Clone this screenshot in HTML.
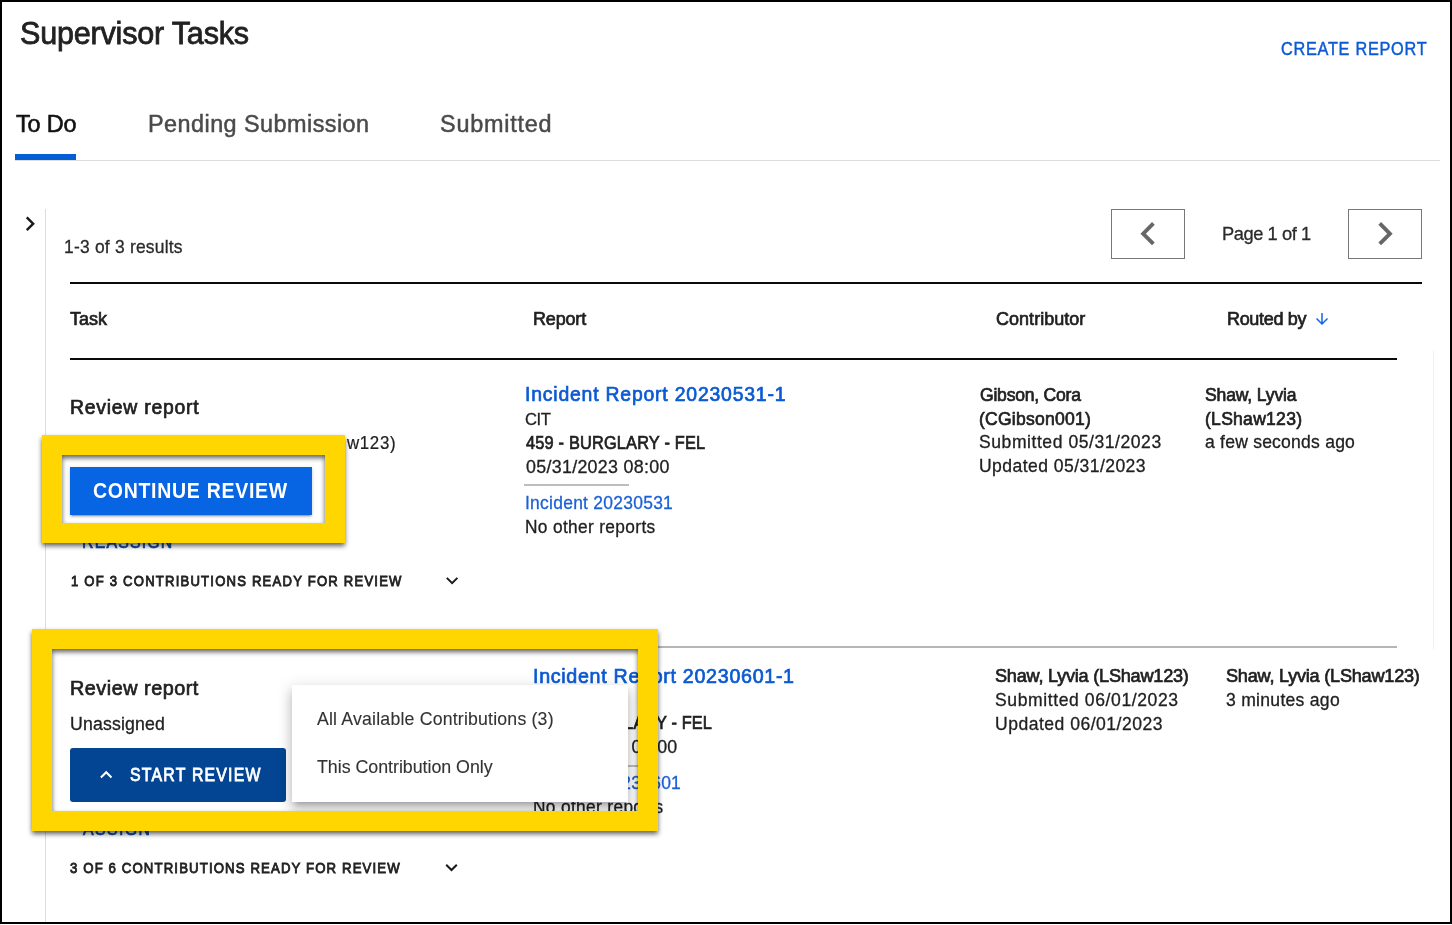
<!DOCTYPE html>
<html><head><meta charset="utf-8"><title>Supervisor Tasks</title>
<style>
html,body{margin:0;padding:0;background:#fff;}
body{width:1452px;height:925px;overflow:hidden;position:relative;font-family:"Liberation Sans",sans-serif;}
#root{position:absolute;left:0;top:0;width:1452px;height:925px;overflow:hidden;}
.t{position:absolute;white-space:nowrap;line-height:1;font-family:"Liberation Sans",sans-serif;}
.s{position:absolute;}


</style></head>
<body class="">
<div id="root">
<div class="s shape" style="left:15px;top:160px;width:1425px;height:1px;background:#dddddd"></div>
<div class="s shape" style="left:15px;top:154px;width:61px;height:6px;background:#045ed4"></div>
<div class="s shape" style="left:45px;top:209px;width:1px;height:713px;background:#dddddd"></div>
<svg class="s shape" style="left:0;top:0" width="1452" height="925" viewBox="0 0 1452 925">
  <path transform="translate(15.4,209.1) scale(1.22)" d="M10 6L8.59 7.41 13.17 12l-4.58 4.59L10 18l6-6z" fill="#1a1a1a"/>
  <rect x="1111.5" y="209.5" width="73" height="49" fill="none" stroke="#777" stroke-width="1"/>
  <rect x="1348.5" y="209.5" width="73" height="49" fill="none" stroke="#777" stroke-width="1"/>
  <path transform="translate(1125,210.5) scale(1.93)" d="M15.41 7.41L14 6l-6 6 6 6 1.41-1.41L10.83 12z" fill="#666"/>
  <path transform="translate(1361.8,210.5) scale(1.93)" d="M10 6L8.59 7.41 13.17 12l-4.58 4.59L10 18l6-6z" fill="#666"/>
  <path transform="translate(1313,310) scale(0.75)" d="M20 12l-1.41-1.41L13 16.17V4h-2v12.17l-5.58-5.59L4 12l8 8 8-8z" fill="#1565e6"/>
  <path transform="translate(440.1,568.6)" d="M16.59 8.59L12 13.17 7.41 8.59 6 10l6 6 6-6z" fill="#1a1a1a"/>
  <path transform="translate(439.5,855.4)" d="M16.59 8.59L12 13.17 7.41 8.59 6 10l6 6 6-6z" fill="#1a1a1a"/>
</svg>
<div class="s shape" style="left:70px;top:282px;width:1352px;height:2px;background:#0a0a0a"></div>
<div class="s shape" style="left:70px;top:358px;width:1327px;height:2px;background:#0a0a0a"></div>
<div class="s shape" style="left:1433px;top:351px;width:1px;height:298px;background:#f0f0f0"></div>
<div class="s shape" style="left:70px;top:467px;width:242px;height:48px;background:#0764e3;box-shadow:0 3px 1px -2px rgba(0,0,0,.2),0 2px 2px 0 rgba(0,0,0,.14),0 1px 5px 0 rgba(0,0,0,.12)"></div>
<div class="s shape" style="left:524px;top:484px;width:105px;height:2px;background:#bdbdbd"></div>
<div class="s shape" style="left:70px;top:646px;width:1327px;height:2px;background:#b5b5b5"></div>
<div class="s shape" style="left:70px;top:748px;width:216px;height:54px;border-radius:3px;background:#034592"></div>
<svg class="s shape" style="left:0;top:0;z-index:1" width="1452" height="925" viewBox="0 0 1452 925">
  <path transform="translate(94.2,762.8)" d="M12 8l-6 6 1.41 1.41L12 10.83l4.59 4.58L18 14z" fill="#fff"/>
</svg>
<div class="s shape" style="left:533px;top:765px;width:105px;height:2px;background:#bdbdbd"></div>
<div class="s shape" style="left:0;top:0;width:1452px;height:924px;box-sizing:border-box;border:2px solid #000;z-index:30"></div>

<div class="t" id="title" style="left:19.70px;top:17.60px;font-size:31.83px;letter-spacing:-0.210px;color:#212121;-webkit-text-stroke:0.8px #212121;transform:scaleX(0.96);transform-origin:0 0">Supervisor Tasks</div>
<div class="t" id="create" style="left:1281.30px;top:38.90px;font-size:19.19px;letter-spacing:0.832px;color:#0b5ad3;-webkit-text-stroke:0.45px #0b5ad3;transform:scaleX(0.85);transform-origin:0 0">CREATE REPORT</div>
<div class="t" id="tab1" style="left:15.60px;top:111.71px;font-size:24.42px;letter-spacing:-0.197px;color:#111111;-webkit-text-stroke:0.6px #111111;transform:scaleX(0.96);transform-origin:0 0">To Do</div>
<div class="t" id="tab2" style="left:147.80px;top:111.71px;font-size:24.42px;letter-spacing:0.461px;color:#4a4a4a;-webkit-text-stroke:0.5px #4a4a4a;transform:scaleX(0.96);transform-origin:0 0">Pending Submission</div>
<div class="t" id="tab3" style="left:440.20px;top:111.71px;font-size:24.42px;letter-spacing:0.800px;color:#4a4a4a;-webkit-text-stroke:0.5px #4a4a4a;transform:scaleX(0.96);transform-origin:0 0">Submitted</div>
<div class="t" id="results" style="left:64.20px;top:237.51px;font-size:18.17px;letter-spacing:0.228px;color:#2a2a2a;-webkit-text-stroke:0.3px #2a2a2a;transform:scaleX(0.96);transform-origin:0 0">1-3 of 3 results</div>
<div class="t" id="page" style="left:1221.50px;top:224.31px;font-size:19.04px;letter-spacing:-0.457px;color:#2a2a2a;-webkit-text-stroke:0.3px #2a2a2a;transform:scaleX(0.96);transform-origin:0 0">Page 1 of 1</div>
<div class="t" id="h_task" style="left:70.20px;top:309.90px;font-size:18.75px;letter-spacing:0.036px;color:#212121;-webkit-text-stroke:0.7px #212121;transform:scaleX(0.96);transform-origin:0 0">Task</div>
<div class="t" id="h_report" style="left:532.60px;top:309.90px;font-size:18.75px;letter-spacing:-0.171px;color:#212121;-webkit-text-stroke:0.7px #212121;transform:scaleX(0.96);transform-origin:0 0">Report</div>
<div class="t" id="h_contrib" style="left:996.10px;top:309.90px;font-size:18.75px;letter-spacing:0.027px;color:#212121;-webkit-text-stroke:0.7px #212121;transform:scaleX(0.96);transform-origin:0 0">Contributor</div>
<div class="t" id="h_routed" style="left:1227.00px;top:309.90px;font-size:18.75px;letter-spacing:-0.331px;color:#212121;-webkit-text-stroke:0.7px #212121;transform:scaleX(0.96);transform-origin:0 0">Routed by</div>
<div class="t" id="r1_task" style="left:69.80px;top:396.90px;font-size:20.20px;letter-spacing:0.790px;color:#212121;-webkit-text-stroke:0.7px #212121;transform:scaleX(0.96);transform-origin:0 0">Review report</div>
<div class="t" id="r1_assigned" style="left:346.70px;top:434.90px;font-size:17.59px;letter-spacing:0.677px;color:#212121;-webkit-text-stroke:0.2px #212121;transform:scaleX(0.96);transform-origin:0 0">w123)</div>
<div class="t" id="r1_reassign" style="left:82.10px;top:532.81px;font-size:18.02px;letter-spacing:1.359px;color:#0b4aa8;-webkit-text-stroke:0.7px #0b4aa8;transform:scaleX(0.88);transform-origin:0 0">REASSIGN</div>
<div class="t" id="r1_contrib" style="left:70.80px;top:572.71px;font-size:15.41px;letter-spacing:1.415px;color:#222222;-webkit-text-stroke:0.9px #222222;transform:scaleX(0.85);transform-origin:0 0">1 OF 3 CONTRIBUTIONS READY FOR REVIEW</div>
<div class="t" id="r1_btn" style="left:93.40px;top:479.81px;font-size:21.66px;letter-spacing:0.800px;color:#ffffff;font-weight:700;transform:scaleX(0.9);transform-origin:0 0">CONTINUE REVIEW</div>
<div class="t" id="r1_rep1" style="left:524.60px;top:384.21px;font-size:20.20px;letter-spacing:0.841px;color:#0b5ad3;-webkit-text-stroke:0.7px #0b5ad3;transform:scaleX(0.96);transform-origin:0 0">Incident Report 20230531-1</div>
<div class="t" id="r1_rep2" style="left:524.60px;top:410.71px;font-size:17.30px;letter-spacing:-0.434px;color:#212121;-webkit-text-stroke:0.3px #212121;transform:scaleX(0.96);transform-origin:0 0">CIT</div>
<div class="t" id="r1_rep3" style="left:525.60px;top:433.80px;font-size:18.17px;letter-spacing:0.204px;color:#212121;-webkit-text-stroke:0.7px #212121;transform:scaleX(0.9);transform-origin:0 0">459 - BURGLARY - FEL</div>
<div class="t" id="r1_rep4" style="left:525.60px;top:458.00px;font-size:18.60px;letter-spacing:0.306px;color:#212121;-webkit-text-stroke:0.3px #212121;transform:scaleX(0.96);transform-origin:0 0">05/31/2023 08:00</div>
<div class="t" id="r1_rep5" style="left:524.60px;top:493.80px;font-size:18.17px;letter-spacing:0.284px;color:#1a60d6;-webkit-text-stroke:0.3px #1a60d6;transform:scaleX(0.96);transform-origin:0 0">Incident 20230531</div>
<div class="t" id="r1_rep6" style="left:524.60px;top:517.71px;font-size:18.02px;letter-spacing:0.362px;color:#212121;-webkit-text-stroke:0.3px #212121;transform:scaleX(0.96);transform-origin:0 0">No other reports</div>
<div class="t" id="r1_c1" style="left:979.60px;top:386.21px;font-size:18.31px;letter-spacing:-0.245px;color:#212121;-webkit-text-stroke:0.7px #212121;transform:scaleX(0.96);transform-origin:0 0">Gibson, Cora</div>
<div class="t" id="r1_c2" style="left:978.60px;top:409.60px;font-size:18.31px;letter-spacing:0.226px;color:#212121;-webkit-text-stroke:0.7px #212121;transform:scaleX(0.96);transform-origin:0 0">(CGibson001)</div>
<div class="t" id="r1_c3" style="left:978.60px;top:433.31px;font-size:18.31px;letter-spacing:0.565px;color:#212121;-webkit-text-stroke:0.3px #212121;transform:scaleX(0.96);transform-origin:0 0">Submitted 05/31/2023</div>
<div class="t" id="r1_c4" style="left:978.60px;top:456.50px;font-size:18.31px;letter-spacing:0.452px;color:#212121;-webkit-text-stroke:0.3px #212121;transform:scaleX(0.96);transform-origin:0 0">Updated 05/31/2023</div>
<div class="t" id="r1_r1" style="left:1205.40px;top:386.21px;font-size:18.31px;letter-spacing:-0.155px;color:#212121;-webkit-text-stroke:0.7px #212121;transform:scaleX(0.96);transform-origin:0 0">Shaw, Lyvia</div>
<div class="t" id="r1_r2" style="left:1205.40px;top:409.60px;font-size:18.31px;letter-spacing:0.265px;color:#212121;-webkit-text-stroke:0.7px #212121;transform:scaleX(0.96);transform-origin:0 0">(LShaw123)</div>
<div class="t" id="r1_r3" style="left:1205.40px;top:433.31px;font-size:18.31px;letter-spacing:0.222px;color:#212121;-webkit-text-stroke:0.3px #212121;transform:scaleX(0.96);transform-origin:0 0">a few seconds ago</div>
<div class="t" id="r2_task" style="left:69.80px;top:677.81px;font-size:20.64px;letter-spacing:0.539px;color:#212121;-webkit-text-stroke:0.7px #212121;transform:scaleX(0.96);transform-origin:0 0">Review report</div>
<div class="t" id="r2_unassigned" style="left:69.80px;top:714.51px;font-size:18.46px;letter-spacing:0.149px;color:#212121;-webkit-text-stroke:0.3px #212121;transform:scaleX(0.96);transform-origin:0 0">Unassigned</div>
<div class="t" id="r2_assign" style="left:83.00px;top:820.01px;font-size:18.02px;letter-spacing:1.618px;color:#0b4aa8;-webkit-text-stroke:0.7px #0b4aa8;transform:scaleX(0.88);transform-origin:0 0">ASSIGN</div>
<div class="t" id="r2_contrib" style="left:69.50px;top:859.90px;font-size:15.55px;letter-spacing:1.304px;color:#222222;-webkit-text-stroke:0.9px #222222;transform:scaleX(0.85);transform-origin:0 0">3 OF 6 CONTRIBUTIONS READY FOR REVIEW</div>
<div class="t" id="r2_btn" style="left:130.20px;top:765.81px;font-size:18.02px;letter-spacing:1.377px;color:#ffffff;-webkit-text-stroke:0.8px #ffffff;transform:scaleX(0.88);transform-origin:0 0;z-index:2">START REVIEW</div>
<div class="t" id="r2_rep1" style="left:533.00px;top:665.50px;font-size:20.49px;letter-spacing:0.719px;color:#0b5ad3;-webkit-text-stroke:0.7px #0b5ad3;transform:scaleX(0.96);transform-origin:0 0">Incident Report 20230601-1</div>
<div class="t" id="r2_rep2" style="left:533.00px;top:691.51px;font-size:17.30px;letter-spacing:-0.472px;color:#212121;-webkit-text-stroke:0.3px #212121;transform:scaleX(0.96);transform-origin:0 0">CIT</div>
<div class="t" id="r2_rep3" style="left:534.00px;top:714.40px;font-size:18.17px;letter-spacing:0.134px;color:#212121;-webkit-text-stroke:0.7px #212121;transform:scaleX(0.9);transform-origin:0 0">459 - BURGLARY - FEL</div>
<div class="t" id="r2_rep4" style="left:534.00px;top:738.00px;font-size:18.60px;letter-spacing:0.301px;color:#212121;-webkit-text-stroke:0.3px #212121;transform:scaleX(0.96);transform-origin:0 0">06/01/2023 08:00</div>
<div class="t" id="r2_rep5" style="left:533.00px;top:774.30px;font-size:18.17px;letter-spacing:0.283px;color:#1a60d6;-webkit-text-stroke:0.3px #1a60d6;transform:scaleX(0.96);transform-origin:0 0">Incident 20230601</div>
<div class="t" id="r2_rep6" style="left:533.00px;top:798.01px;font-size:18.02px;letter-spacing:0.366px;color:#212121;-webkit-text-stroke:0.3px #212121;transform:scaleX(0.96);transform-origin:0 0">No other reports</div>
<div class="t" id="r2_c1" style="left:994.80px;top:667.31px;font-size:18.90px;letter-spacing:-0.251px;color:#212121;-webkit-text-stroke:0.7px #212121;transform:scaleX(0.96);transform-origin:0 0">Shaw, Lyvia (LShaw123)</div>
<div class="t" id="r2_c2" style="left:994.80px;top:690.90px;font-size:18.31px;letter-spacing:0.613px;color:#212121;-webkit-text-stroke:0.3px #212121;transform:scaleX(0.96);transform-origin:0 0">Submitted 06/01/2023</div>
<div class="t" id="r2_c3" style="left:994.80px;top:714.71px;font-size:18.31px;letter-spacing:0.507px;color:#212121;-webkit-text-stroke:0.3px #212121;transform:scaleX(0.96);transform-origin:0 0">Updated 06/01/2023</div>
<div class="t" id="r2_r1" style="left:1226.30px;top:667.31px;font-size:18.90px;letter-spacing:-0.251px;color:#212121;-webkit-text-stroke:0.7px #212121;transform:scaleX(0.96);transform-origin:0 0">Shaw, Lyvia (LShaw123)</div>
<div class="t" id="r2_r2" style="left:1226.30px;top:690.90px;font-size:18.31px;letter-spacing:0.288px;color:#212121;-webkit-text-stroke:0.3px #212121;transform:scaleX(0.96);transform-origin:0 0">3 minutes ago</div>
<div class="t" id="menu1" style="left:316.70px;top:709.31px;font-size:19.04px;letter-spacing:0.203px;color:#333333;-webkit-text-stroke:0.12px #333333;transform:scaleX(0.93);transform-origin:0 0;z-index:6">All Available Contributions (3)</div>
<div class="t" id="menu2" style="left:316.70px;top:757.00px;font-size:19.19px;letter-spacing:-0.046px;color:#333333;-webkit-text-stroke:0.12px #333333;transform:scaleX(0.93);transform-origin:0 0;z-index:6">This Contribution Only</div>
<div class="s" style="left:292px;top:685px;width:336px;height:117px;background:#fff;z-index:5;box-shadow:0 5px 5px -3px rgba(0,0,0,.2),0 8px 10px 1px rgba(0,0,0,.14),0 3px 14px 2px rgba(0,0,0,.12)"></div>
<div class="s" style="left:42px;top:435px;width:303px;height:108px;box-sizing:border-box;border:20px solid #ffd600;z-index:10;filter:drop-shadow(0px 3px 2.5px rgba(0,0,0,.62))"></div>
<div class="s" style="left:32px;top:629px;width:626px;height:202px;box-sizing:border-box;border:20px solid #ffd600;z-index:10;filter:drop-shadow(0px 3px 2.5px rgba(0,0,0,.62))"></div>

</div>
</body></html>
